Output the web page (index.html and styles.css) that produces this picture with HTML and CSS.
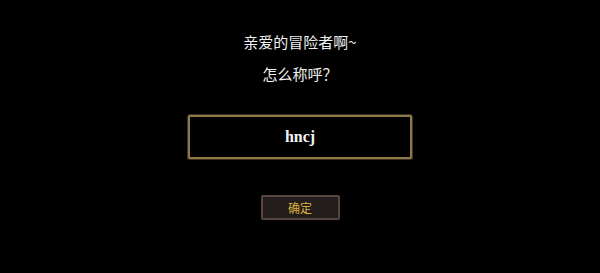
FILE: index.html
```html
<!DOCTYPE html>
<html lang="zh">
<head>
<meta charset="utf-8">
<link rel="stylesheet" href="styles.css">
</head>
<body>
<main class="dialog">
  <p class="line line-first">亲爱的冒险者啊~</p>
  <p class="line line-second">怎么称呼？</p>
  <div class="name-box"><span class="name">hncj</span></div>
  <button class="confirm">确定</button>
</main>
</body>
</html>
```

FILE: styles.css
```css
html, body {
  margin: 0;
  padding: 0;
  background: #000;
}
body {
  width: 600px;
  height: 273px;
  overflow: hidden;
}
.dialog {
  display: flex;
  flex-direction: column;
  align-items: center;
  padding-top: 32px;
}
.line {
  margin: 0;
  color: #f0f0f0;
  font-family: "Noto Sans CJK SC", "Noto Sans", sans-serif;
  font-size: 15px;
  line-height: 20px;
  height: 20px;
}
.line-second {
  margin-top: 12px;
}
.name-box {
  margin-top: 31px;
  box-sizing: border-box;
  width: 224px;
  height: 44px;
  border: 2px solid #8e784a;
  border-radius: 2px;
  box-shadow: 0 0 0 1px #3e3220;
  background: #000;
  display: flex;
  align-items: center;
  justify-content: center;
}
.name {
  color: #f4f4f4;
  font-family: "Liberation Serif", serif;
  font-weight: bold;
  font-size: 16px;
  line-height: 20px;
}
.confirm {
  margin-top: 36px;
  box-sizing: border-box;
  width: 79px;
  height: 25px;
  padding: 0;
  border: 2px solid #56463d;
  border-radius: 2px;
  background: #221c1a;
  color: #dcb23a;
  font-family: "Noto Sans CJK SC", sans-serif;
  font-size: 12px;
  line-height: 21px;
}
```
